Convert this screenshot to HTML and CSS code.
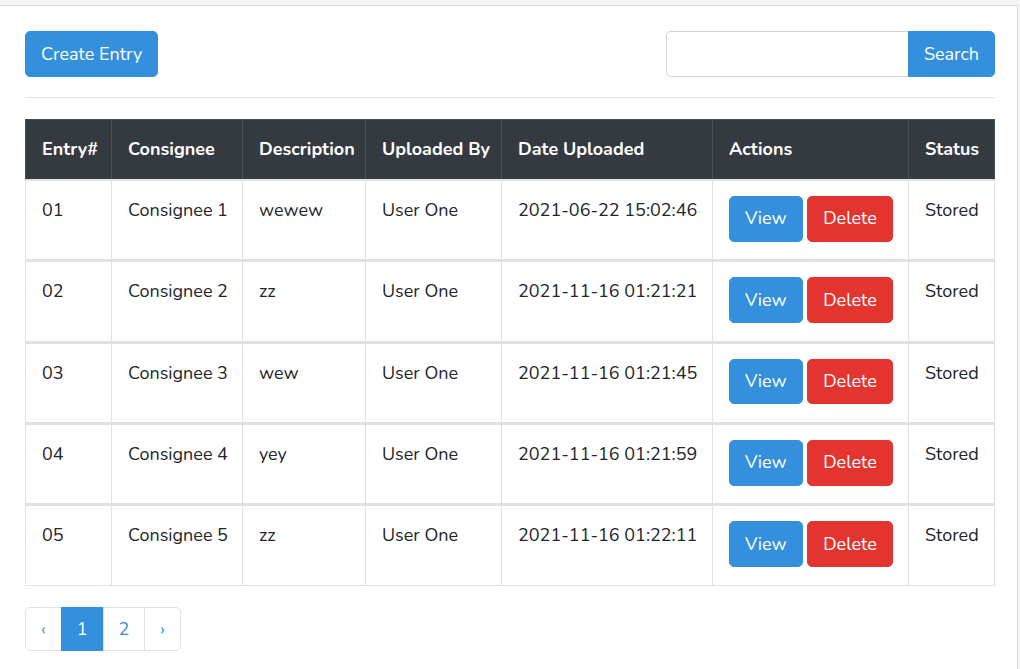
FILE: index.html
```html
<!DOCTYPE html>
<html>
<head>
	<meta charset="utf-8">
	<title>Entries</title>
	<link rel="stylesheet" href="styles.css">
</head>
<body>

	<div class="card">
		<div class="toolbar">
			<a href="#" class="btn btn-primary">Create Entry</a>
			<form class="search">
				<input type="text" class="search-input">
				<button type="button" class="btn btn-primary search-btn">Search</button>
			</form>
		</div>

		<hr>

		<table class="entries">
			<colgroup>
				<col style="width:86px">
				<col style="width:131px">
				<col style="width:123px">
				<col style="width:136px">
				<col style="width:211px">
				<col style="width:196px">
				<col style="width:86px">
			</colgroup>
			<thead>
				<tr>
					<th>Entry#</th>
					<th>Consignee</th>
					<th>Description</th>
					<th>Uploaded By</th>
					<th>Date Uploaded</th>
					<th>Actions</th>
					<th>Status</th>
				</tr>
			</thead>
			<tbody>
				<tr>
					<td>01</td>
					<td>Consignee 1</td>
					<td>wewew</td>
					<td>User One</td>
					<td>2021-06-22 15:02:46</td>
					<td class="actions"><a href="#" class="btn btn-primary">View</a> <a href="#" class="btn btn-danger">Delete</a></td>
					<td>Stored</td>
				</tr>
			</tbody>
			<tbody>
				<tr>
					<td>02</td>
					<td>Consignee 2</td>
					<td>zz</td>
					<td>User One</td>
					<td>2021-11-16 01:21:21</td>
					<td class="actions"><a href="#" class="btn btn-primary">View</a> <a href="#" class="btn btn-danger">Delete</a></td>
					<td>Stored</td>
				</tr>
			</tbody>
			<tbody>
				<tr>
					<td>03</td>
					<td>Consignee 3</td>
					<td>wew</td>
					<td>User One</td>
					<td>2021-11-16 01:21:45</td>
					<td class="actions"><a href="#" class="btn btn-primary">View</a> <a href="#" class="btn btn-danger">Delete</a></td>
					<td>Stored</td>
				</tr>
			</tbody>
			<tbody>
				<tr>
					<td>04</td>
					<td>Consignee 4</td>
					<td>yey</td>
					<td>User One</td>
					<td>2021-11-16 01:21:59</td>
					<td class="actions"><a href="#" class="btn btn-primary">View</a> <a href="#" class="btn btn-danger">Delete</a></td>
					<td>Stored</td>
				</tr>
			</tbody>
			<tbody>
				<tr>
					<td>05</td>
					<td>Consignee 5</td>
					<td>zz</td>
					<td>User One</td>
					<td>2021-11-16 01:22:11</td>
					<td class="actions"><a href="#" class="btn btn-primary">View</a> <a href="#" class="btn btn-danger">Delete</a></td>
					<td>Stored</td>
				</tr>
			</tbody>
		</table>

		<ul class="pagination">
			<li class="page-item disabled"><span class="page-link">&lsaquo;</span></li>
			<li class="page-item active"><span class="page-link">1</span></li>
			<li class="page-item"><a href="#" class="page-link">2</a></li>
			<li class="page-item"><a href="#" class="page-link">&rsaquo;</a></li>
		</ul>
	</div>

</body>
</html>
```

FILE: styles.css
```css
body {
	margin: 0;
	background: #f5f5f5;
	font-family: "Nunito", "Lato", "Noto Sans", sans-serif;
	font-size: 18px;
	line-height: 1.6;
	color: #212529;
}

.card {
	margin-top: 5px;
	width: 1018px;
	height: 664px;
	box-sizing: border-box;
	background: #fff;
	border-top: 1px solid #dcdcdc;
	border-right: 1px solid #dcdcdc;
	padding: 25px 23px 0 25px;
	overflow: hidden;
}

.toolbar {
	display: flex;
	justify-content: space-between;
	align-items: center;
	width: 970px;
}

.btn {
	display: inline-block;
	padding: 7.5px 15px;
	font-size: 18px;
	line-height: 1.6;
	font-family: inherit;
	color: #fff;
	text-decoration: none;
	border: 1px solid transparent;
	border-radius: 5px;
	cursor: pointer;
	vertical-align: middle;
}

.btn-primary {
	background: #3490dc;
	border-color: #3490dc;
}

.btn-danger {
	background: #e3342f;
	border-color: #e3342f;
}

.search {
	display: flex;
	margin: 0;
}

.search-input {
	width: 242px;
	height: 46px;
	box-sizing: border-box;
	border: 1px solid #ced4da;
	border-right: none;
	border-radius: 5px 0 0 5px;
	padding: 7px 15px;
	font: inherit;
}

.search-btn {
	border-radius: 0 5px 5px 0;
	height: 46px;
}

hr {
	width: 970px;
	margin: 20px 0 21px 0;
	border: 0;
	border-top: 1px solid #e2e4e7;
}

.entries {
	width: 969px;
	table-layout: fixed;
	border-collapse: collapse;
}

.entries th,
.entries td {
	padding: 15px 16px 17.6px 16px;
	text-align: left;
	vertical-align: top;
	border: 1px solid #dee2e6;
	white-space: nowrap;
}

.entries th {
	background: #343a40;
	color: #fff;
	font-weight: 700;
	border-color: #454d55;
	border-bottom: 2px solid #dee2e6;
	padding-top: 15px;
	padding-bottom: 15px;
}

/* each entry sits in its own tbody, so rows get the heavier divider */
.entries tbody + tbody td {
	border-top: 3px solid #dee2e6;
}

.entries td.actions .btn {
	vertical-align: top;
}

.pagination {
	display: flex;
	list-style: none;
	margin: 21px 0 0 0;
	padding: 0;
}

.page-link {
	display: block;
	padding: 10px 15px;
	line-height: 1.25;
	color: #3490dc;
	text-decoration: none;
	background: #fff;
	border: 1px solid #dee2e6;
	margin-left: -1px;
}

.page-item:first-child .page-link {
	margin-left: 0;
	border-radius: 5px 0 0 5px;
}

.page-item:last-child .page-link {
	border-radius: 0 5px 5px 0;
}

.page-item.active .page-link {
	background: #3490dc;
	border-color: #3490dc;
	color: #fff;
}

.page-item.disabled .page-link {
	color: #6c8fb0;
}
```
